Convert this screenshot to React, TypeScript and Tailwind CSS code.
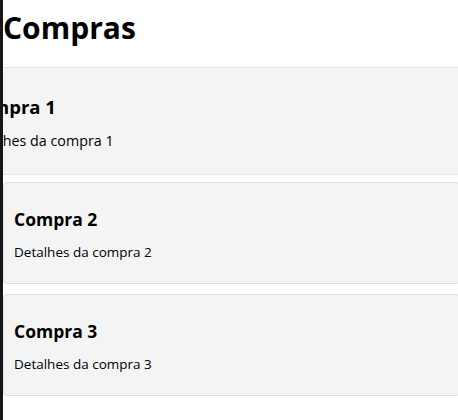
const COMPRAS = [
  { id: 1, titulo: 'Compra 1', detalhes: 'Detalhes da compra 1' },
  { id: 2, titulo: 'Compra 2', detalhes: 'Detalhes da compra 2' },
  { id: 3, titulo: 'Compra 3', detalhes: 'Detalhes da compra 3' },
];

export default function App() {
  return (
    <div
      className="flex min-h-[420px] w-full bg-white text-black"
      style={{ fontFamily: '"Open Sans", "Noto Sans", sans-serif' }}
    >
      <div className="w-[3px] shrink-0 bg-[#161616]" />

      <main className="flex-1 overflow-hidden">
        <h1 className="h-[60px] pl-0 pt-[6px] text-[30px] font-bold leading-[44px]">Compras</h1>

        <ul className="mt-[10px] flex flex-col gap-[10px]">
          {COMPRAS.map((c) => (
            <li
              key={c.id}
              className={
                c.id === 1
                  ? 'h-[102px] w-[540px] origin-left -translate-x-[47px] scale-[1.06] rounded-[4px] border border-[#e4e4e4] bg-[#f4f4f4] px-[10px] pt-[24px]'
                  : 'h-[102px] w-[457px] rounded-[4px] border border-[#dedede] bg-[#f4f4f4] px-[10px] pt-[24px]'
              }
            >
              <h3 className="text-[17.5px] font-bold leading-[24px]">{c.titulo}</h3>
              <p className="mt-[11px] text-[13.5px] leading-[20px]">{c.detalhes}</p>
            </li>
          ))}
        </ul>
      </main>
    </div>
  );
}
